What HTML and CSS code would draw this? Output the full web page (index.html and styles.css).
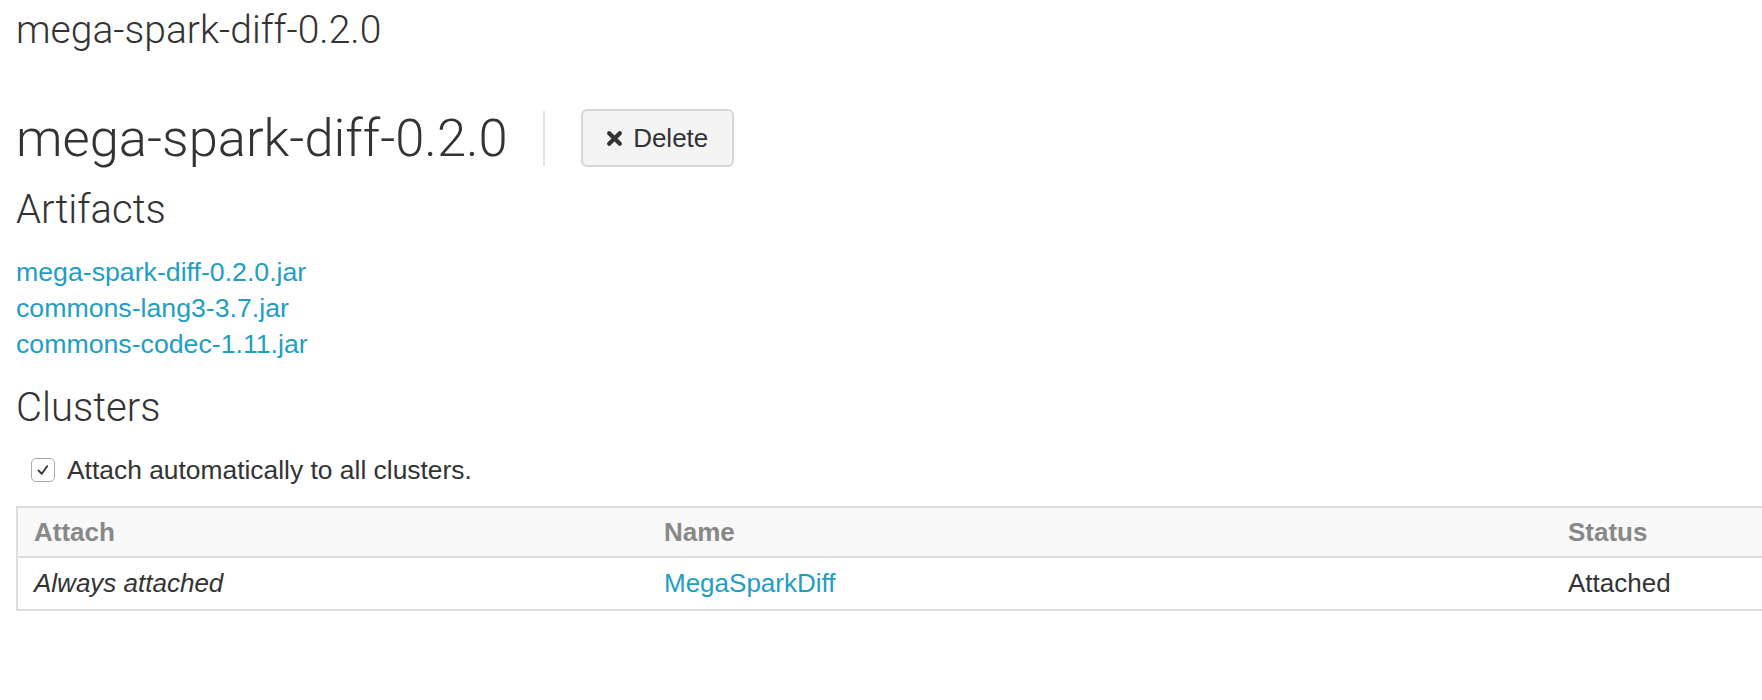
FILE: index.html
```html
<!DOCTYPE html>
<html>
<head>
<meta charset="utf-8">
<link rel="stylesheet" href="styles.css">
</head>
<body>
<div class="page">
  <div class="crumb">mega-spark-diff-0.2.0</div>
  <div class="header">
    <h1 class="title">mega-spark-diff-0.2.0</h1>
    <div class="sep"></div>
    <button class="btn"><svg class="x-icon" viewBox="0 0 16 16" width="17" height="17"><path d="M3 3 L13 13 M13 3 L3 13" stroke="#333" stroke-width="4" stroke-linecap="round"/></svg><span>Delete</span></button>
  </div>
  <h2 class="section">Artifacts</h2>
  <ul class="links">
    <li><a href="#">mega-spark-diff-0.2.0.jar</a></li>
    <li><a href="#">commons-lang3-3.7.jar</a></li>
    <li><a href="#">commons-codec-1.11.jar</a></li>
  </ul>
  <h2 class="section clusters">Clusters</h2>
  <label class="check-row">
    <span class="checkbox"><svg viewBox="0 0 24 24" width="24" height="24"><path d="M6.5 12.5 L10.5 16.5 L17 7.5" fill="none" stroke="#333" stroke-width="2.2" stroke-linecap="round" stroke-linejoin="round"/></svg></span>
    <span>Attach automatically to all clusters.</span>
  </label>
  <div class="table-wrap">
    <table class="tbl">
      <thead>
        <tr><th class="c1">Attach</th><th class="c2">Name</th><th class="c3">Status</th></tr>
      </thead>
      <tbody>
        <tr><td class="c1"><em>Always attached</em></td><td class="c2"><a href="#">MegaSparkDiff</a></td><td class="c3">Attached</td></tr>
      </tbody>
    </table>
  </div>
</div>
</body>
</html>
```
FILE: styles.css
```css
html, body {
  margin: 0;
  padding: 0;
  background: #fff;
  overflow: hidden;
}
body {
  font-family: "Liberation Sans", Arial, Helvetica, sans-serif;
  color: #333;
  font-size: 26px;
}
.page {
  padding-left: 16px;
}
.crumb {
  font-family: Roboto, "Liberation Sans", sans-serif;
  font-weight: 300;
  font-size: 39px;
  line-height: 44px;
  padding-top: 8px;
  color: #333;
}
.header {
  display: flex;
  align-items: center;
  margin-top: 57px;
  height: 58px;
}
.title {
  margin: 0;
  font-family: Roboto, "Liberation Sans", sans-serif;
  font-weight: 300;
  font-size: 52.5px;
  line-height: 58px;
  color: #333;
}
.sep {
  width: 2px;
  height: 55px;
  background: #e3e3e3;
  margin-left: 35px;
}
.btn {
  margin-left: 36px;
  display: flex;
  align-items: center;
  gap: 10px;
  height: 58px;
  width: 153px;
  justify-content: center;
  background: #f4f4f4;
  border: 2px solid #d6d6d6;
  border-radius: 6px;
  font-family: "Liberation Sans", Arial, sans-serif;
  font-size: 26px;
  color: #333;
  padding: 0 14px;
}
.x-icon {
  display: block;
}
.section {
  margin: 19px 0 0 0;
  font-family: Roboto, "Liberation Sans", sans-serif;
  font-weight: 300;
  font-size: 40px;
  line-height: 48px;
  color: #333;
}
.links {
  list-style: none;
  margin: 20px 0 0 0;
  padding: 0;
  font-size: 26.7px;
}
.links li {
  line-height: 36px;
}
a {
  color: #229ec2;
  text-decoration: none;
}
.clusters {
  margin-top: 22px;
}
.check-row {
  display: flex;
  align-items: center;
  gap: 12px;
  height: 36px;
  margin: 20px 0 0 15px;
  font-size: 26.4px;
}
.checkbox {
  width: 22px;
  height: 22px;
  border: 1px solid #aaa;
  border-radius: 5px;
  display: flex;
  align-items: center;
  justify-content: center;
  background: #fff;
}
.checkbox svg {
  width: 20px;
  height: 20px;
}
.table-wrap {
  margin-top: 18px;
  overflow: hidden;
}
.tbl {
  border-collapse: collapse;
  width: 1900px;
  border: 2px solid #ddd;
}
.tbl th, .tbl td {
  text-align: left;
  padding: 0 16px;
  font-size: 26px;
}
.tbl th {
  background: #f9f9f9;
  color: #888;
  font-weight: bold;
  height: 48px;
  border-bottom: 2px solid #ddd;
}
.tbl td {
  height: 51px;
}
.tbl .c1 { width: 598px; }
.tbl .c2 { width: 872px; }
```
